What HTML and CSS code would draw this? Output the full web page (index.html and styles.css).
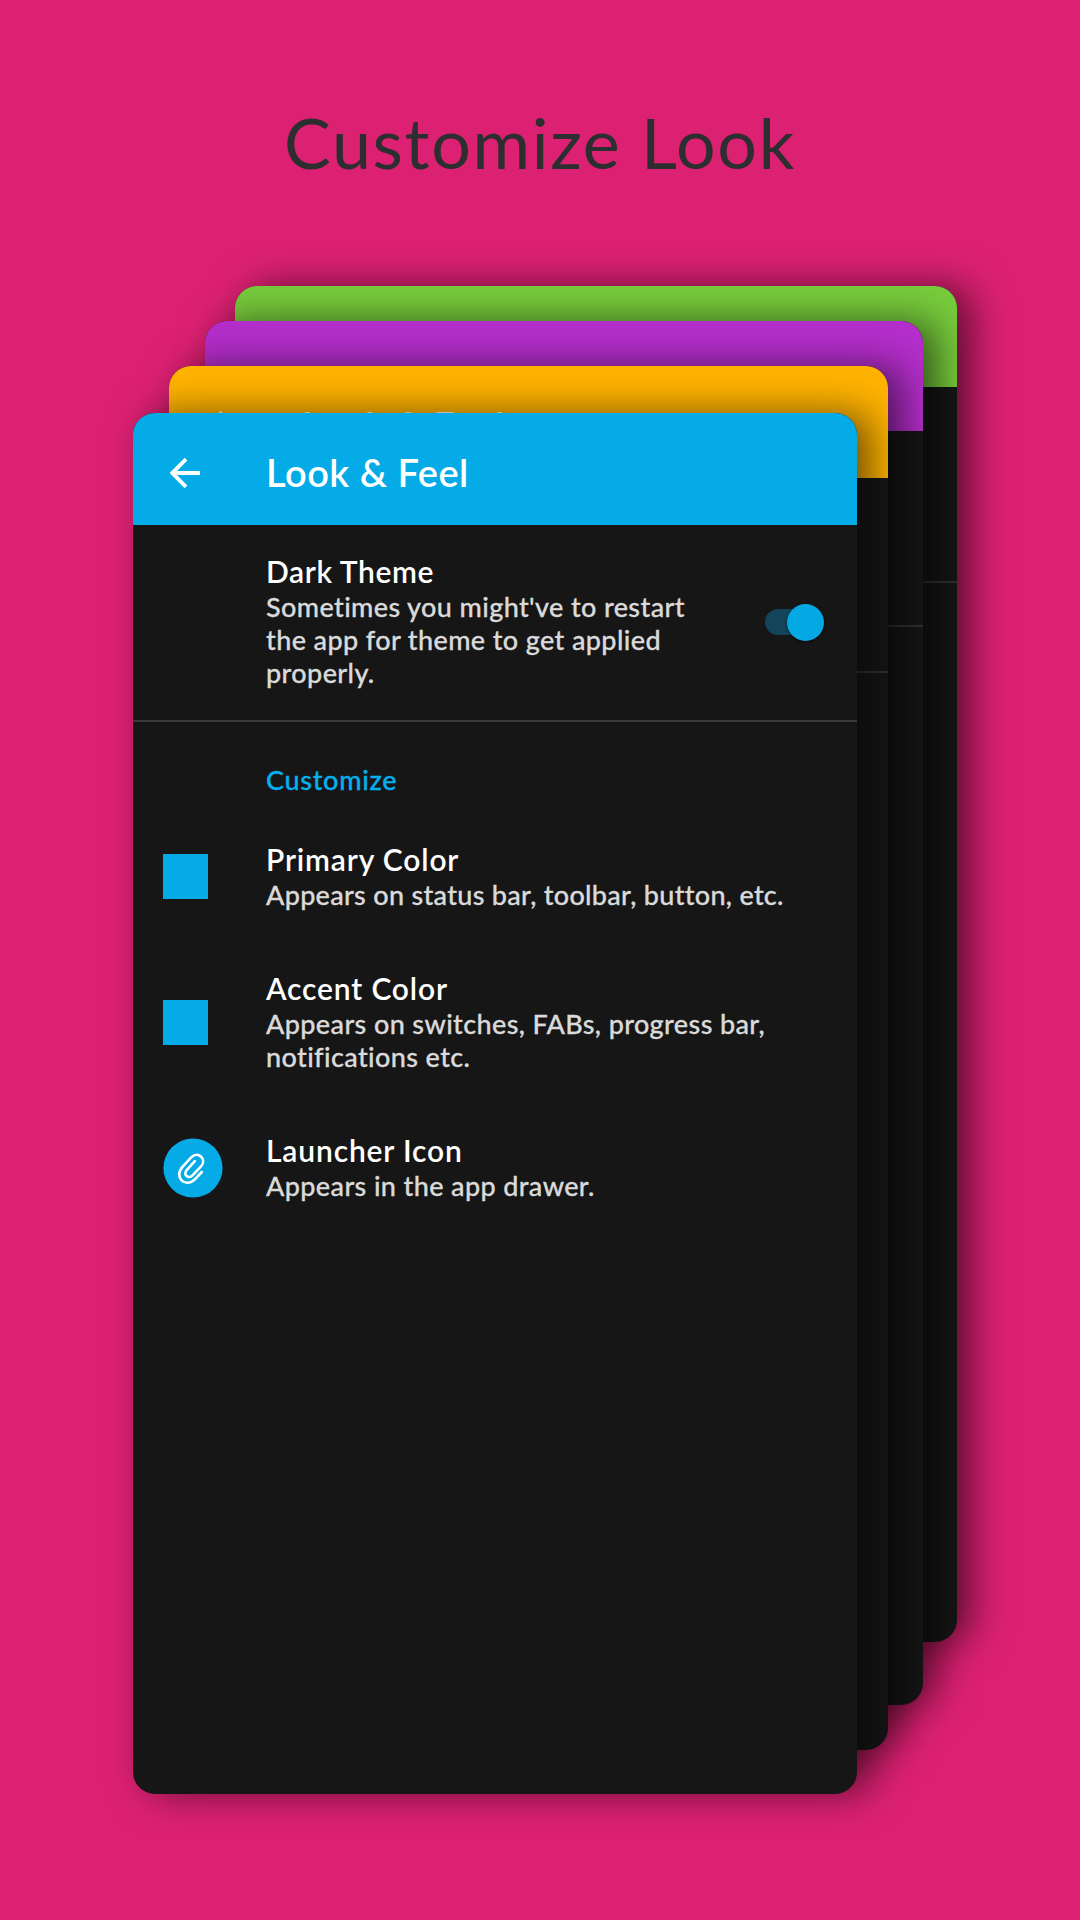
FILE: index.html
```html
<!DOCTYPE html>
<html lang="en">
<head>
<meta charset="utf-8">
<title>Customize Look</title>
<link rel="stylesheet" href="styles.css">
</head>
<body>
<main class="promo">
  <h1 class="headline">Customize Look</h1>

  <section class="card card-green">
    <div class="toolbar"></div>
    <div class="blank"></div>
  </section>
  <section class="card card-purple">
    <div class="toolbar"></div>
    <div class="blank"></div>
  </section>
  <section class="card card-orange">
    <div class="toolbar">
      <svg class="back" viewBox="0 0 30 30"><path d="M30 15H2.5M16 1.2L2.2 15L16 28.8"/></svg>
      <span class="toolbar-title">Look &amp; Feel</span>
    </div>
    <div class="blank"></div>
  </section>

  <section class="card card-blue">
    <header class="toolbar">
      <svg class="back" viewBox="0 0 30 30"><path d="M30 15H2.5M16 1.2L2.2 15L16 28.8"/></svg>
      <span class="toolbar-title">Look &amp; Feel</span>
    </header>
    <div class="row theme-row">
      <div class="text">
        <div class="name name-theme">Dark Theme</div>
        <div class="note">Sometimes you might've to restart<br>the app for theme to get applied<br>properly.</div>
      </div>
      <div class="switch"><span class="thumb"></span></div>
    </div>
    <div class="group">Customize</div>
    <div class="list">
      <div class="row">
        <div class="icon"><span class="swatch"></span></div>
        <div class="text">
          <div class="name">Primary Color</div>
          <div class="note note-primary">Appears on status bar, toolbar, button, etc.</div>
        </div>
      </div>
      <div class="row">
        <div class="icon"><span class="swatch"></span></div>
        <div class="text">
          <div class="name">Accent Color</div>
          <div class="note">Appears on switches, FABs, progress bar,<br>notifications etc.</div>
        </div>
      </div>
      <div class="row">
        <div class="icon">
          <svg class="launcher" viewBox="0 0 60 60">
            <circle cx="30" cy="30" r="29.6"/>
            <path d="M31.8 23.2L23.7 32.1C19.6 36.6 25.4 41.7 29.5 37.4L38 28.4C44.3 21.6 35.2 12.4 28.4 19.2L19.7 28.6C10.2 39 22.1 50.8 32.1 41.1L38.8 34"/>
          </svg>
        </div>
        <div class="text">
          <div class="name">Launcher Icon</div>
          <div class="note">Appears in the app drawer.</div>
        </div>
      </div>
    </div>
  </section>
</main>
</body>
</html>
```
FILE: styles.css
```css
* { box-sizing: border-box; }
body { margin: 0; }

.promo {
  position: relative;
  width: 1080px;
  height: 1920px;
  overflow: hidden;
  background: #dc2173;
  font-family: Lato, "Open Sans", sans-serif;
}

.headline {
  margin: 0;
  padding-top: 100px;
  text-align: center;
  font-size: 70px;
  line-height: 84px;
  font-weight: 400;
  letter-spacing: 1.65px;
  color: #2d2e30;
  white-space: nowrap;
}

/* overlapping phone screens */
.card {
  position: absolute;
  border-radius: 22px;
  overflow: hidden;
  background: #161616;
  box-shadow: 15px 0 38px rgba(0, 0, 0, .54);
}
.card-green { left: 234.5px; top: 286px; width: 722px; height: 1355.5px; --c: #78cc3c; --bar: 101px; --gap: 196px; }
.card-purple { left: 205px; top: 321px; width: 718px; height: 1384px; --c: #b42ecb; --bar: 110px; --gap: 196px; }
.card-orange { left: 169px; top: 366px; width: 719px; height: 1384px; --c: #ffb300; --bar: 112px; --gap: 195px; }
.card-blue { left: 133px; top: 413px; width: 724px; height: 1381px; --c: #04abe6; --bar: 112px; }

.toolbar {
  display: flex;
  align-items: center;
  height: var(--bar);
  padding: 7px 0 0 37px;
  background: var(--c);
}
.back {
  width: 30px;
  height: 30px;
  fill: none;
  stroke: #fff;
  stroke-width: 3.9;
}
.toolbar-title {
  margin: -2px 0 0 66px;
  font-size: 38px;
  line-height: 46px;
  font-weight: 600;
  letter-spacing: .5px;
  color: #fff;
  white-space: nowrap;
}
.blank {
  height: var(--gap);
  border-bottom: 2px solid #323232;
}

.row { display: flex; align-items: center; }
.theme-row {
  height: 197px;
  padding: 28px 33px 31px 133px;
  border-bottom: 2px solid #3a3a3a;
}
.text { flex: 1; white-space: nowrap; }
.name {
  font-size: 30px;
  line-height: 37px;
  font-weight: 600;
  letter-spacing: .85px;
  color: #fff;
}
.name-theme { letter-spacing: .6px; }
.note, .group {
  font-size: 27px;
  line-height: 33px;
  font-weight: 500;
  -webkit-text-stroke: .3px currentColor;
}
.note { letter-spacing: .38px; color: #dadada; }
.note-primary { letter-spacing: .3px; }
.group {
  padding: 41px 0 0 133px;
  letter-spacing: .7px;
  color: #04b0ee;
}

.switch {
  display: flex;
  align-items: center;
  justify-content: flex-end;
  width: 59px;
  height: 38px;
  margin-top: 2px;
}
.switch::before {
  content: "";
  width: 40px;
  height: 26px;
  margin-right: -18px;
  border-radius: 13px 0 0 13px;
  background: #12455b;
}
.thumb {
  z-index: 1;
  width: 37px;
  height: 37px;
  border-radius: 50%;
  background: #04a9e3;
  box-shadow: 0 1px 3px rgba(0, 0, 0, .6);
}

.list {
  display: flex;
  flex-direction: column;
  gap: 59px;
  padding-top: 45px;
}
.icon {
  display: flex;
  width: 133px;
  padding: 1px 0 0 29.5px;
}
.swatch { width: 45px; height: 45px; background: #04abe6; }
.launcher { width: 60px; height: 60px; }
.launcher circle { fill: #04abe6; }
.launcher path {
  fill: none;
  stroke: #fff;
  stroke-width: 2.6;
  stroke-linecap: round;
}
```
